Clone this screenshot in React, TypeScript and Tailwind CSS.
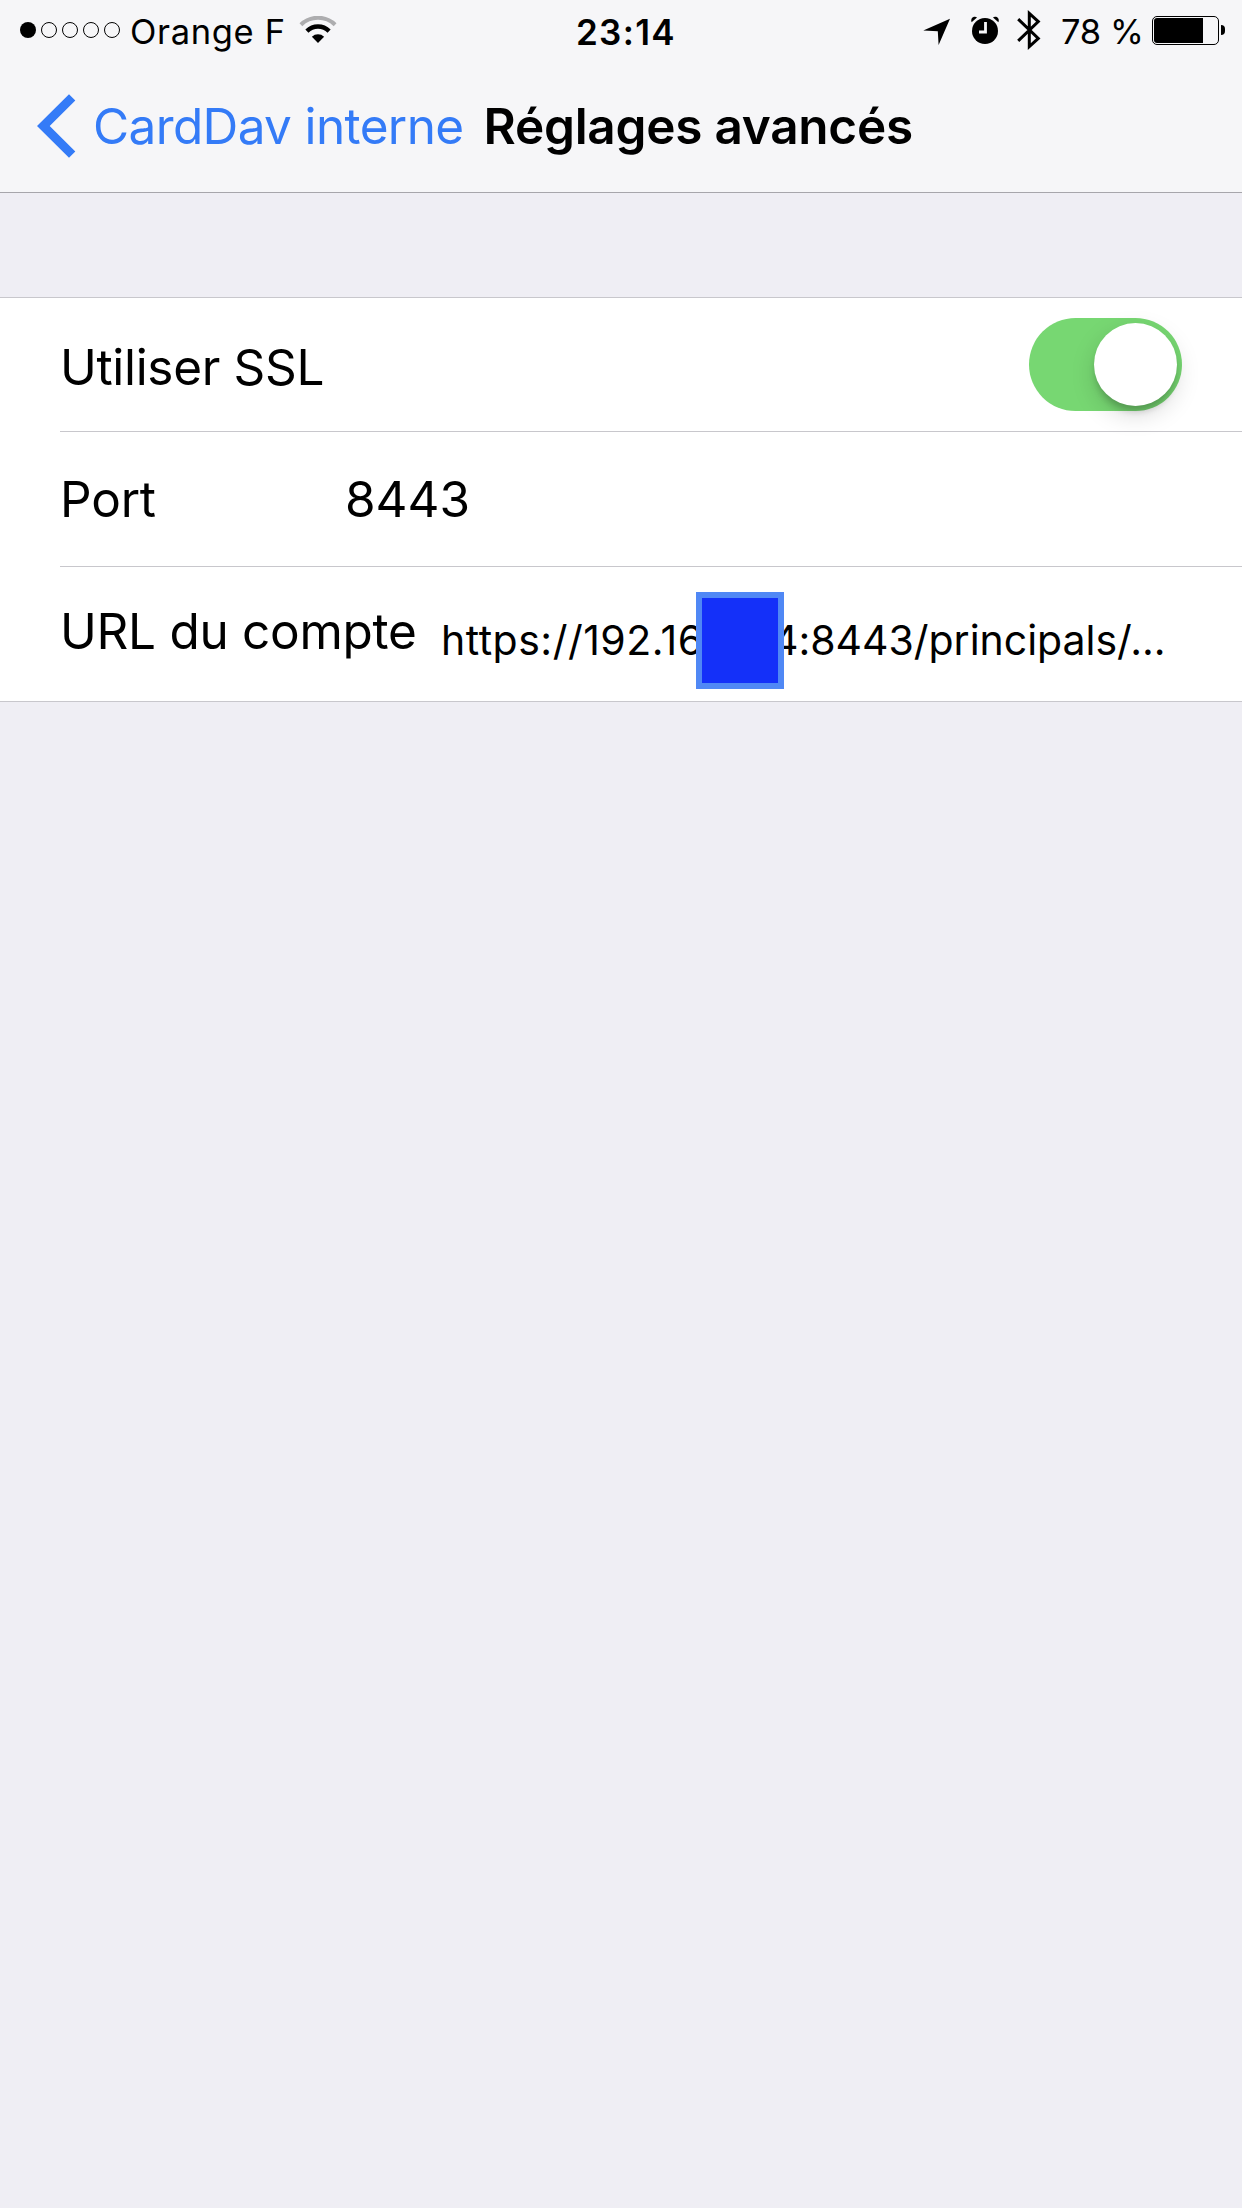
import type { ReactNode } from "react";
import { useState } from "react";

const SIGNAL_STRENGTH = 1;
const BATTERY_LEVEL = 78;

function WifiIcon() {
  return (
    <svg width="38" height="28" viewBox="0 0 38 28" fill="none" aria-hidden="true">
      <path d="M1.9 8.7A24.5 24.5 0 0 1 36.1 8.7" stroke="#adadaf" strokeWidth="4" />
      <path d="M7.9 15.1A15.8 15.8 0 0 1 30.1 15.1" stroke="#000" strokeWidth="4.4" />
      <path d="M19 27 12.9 20.7A8.7 8.7 0 0 1 25.1 20.7Z" fill="#000" />
    </svg>
  );
}

function LocationIcon() {
  return (
    <svg width="28" height="28" viewBox="0 0 28 28" aria-hidden="true">
      <path d="M27 .8 15.6 27 14.8 13.2 .3 12.4Z" fill="#000" />
    </svg>
  );
}

function AlarmIcon() {
  return (
    <svg width="30" height="28" viewBox="0 0 30 28" aria-hidden="true">
      <circle cx="15" cy="15" r="13" fill="#000" />
      <path d="M1.6 6.2C.6 4 1.6 1.4 4 .8 5.2.5 6.3.8 7 1.4Z" fill="#000" />
      <path d="M28.4 6.2C29.4 4 28.4 1.4 26 .8 24.8.5 23.7.8 23 1.4Z" fill="#000" />
      <path d="M15.5 6V16H9" fill="none" stroke="#f6f6f8" strokeWidth="2.8" />
    </svg>
  );
}

function BluetoothIcon() {
  return (
    <svg width="26" height="42" viewBox="0 0 26 42" fill="none" aria-hidden="true">
      <path
        d="M2.2 10.2 22.3 29.4 13.3 37.7V4.3L22.3 12.6 2.2 31.8"
        stroke="#000"
        strokeWidth="3"
      />
    </svg>
  );
}

function StatusBar() {
  return (
    <div className="flex h-[60px] items-center text-[34.5px] leading-[60px] whitespace-nowrap">
      <div className="flex w-[576px] items-center pl-5">
        <div className="flex gap-[5px]">
          {[1, 2, 3, 4, 5].map((dot) => (
            <span
              key={dot}
              className={
                dot <= SIGNAL_STRENGTH
                  ? "size-4 rounded-full bg-black"
                  : "size-4 rounded-full border border-black"
              }
            />
          ))}
        </div>
        <span className="ml-[10px] pt-[3px] tracking-[0.65px]">Orange F</span>
        <span className="ml-[13px]">
          <WifiIcon />
        </span>
      </div>
      <span className="w-[347px] pt-[3px] text-[35px] font-semibold tracking-[1.3px]">23:14</span>
      <div className="flex items-center">
        <span className="pt-[3px]">
          <LocationIcon />
        </span>
        <span className="ml-[19px]">
          <AlarmIcon />
        </span>
        <span className="ml-[16px]">
          <BluetoothIcon />
        </span>
        <span className="ml-[19px] w-[91px] pt-[3px] tracking-[-0.36px]">78 %</span>
        <div className="flex h-[29px] w-[67px] rounded-[5px] border border-black p-px">
          <div className="h-full rounded-l-[3px] bg-black" style={{ width: `${BATTERY_LEVEL}%` }} />
        </div>
        <span className="ml-[2px] h-[10px] w-1 rounded-r-full bg-black" />
      </div>
    </div>
  );
}

function NavBar({ back, title }: { back: string; title: string }) {
  return (
    <div className="flex h-[132px] items-center pl-[37px] whitespace-nowrap">
      <button type="button" className="flex items-center text-[#347bf7]">
        <svg width="39" height="64" viewBox="0 0 39 64" aria-hidden="true">
          <path d="M0 32 32 .3 38.3 6.6 12.7 32 38.3 57.4 32 63.7Z" fill="currentColor" />
        </svg>
        <span className="ml-[17px] tracking-[-0.63px]">{back}</span>
      </button>
      <h1 className="ml-[20px] font-semibold tracking-[-0.25px]">{title}</h1>
    </div>
  );
}

function Switch({ checked, onChange }: { checked: boolean; onChange: (value: boolean) => void }) {
  return (
    <button
      type="button"
      role="switch"
      aria-checked={checked}
      onClick={() => onChange(!checked)}
      className={
        checked
          ? "flex h-[93px] w-[153px] items-center justify-end rounded-full bg-[#77d772] px-[5px]"
          : "flex h-[93px] w-[153px] items-center justify-start rounded-full bg-[#e5e5ea] px-[5px]"
      }
    >
      <span className="size-[83px] rounded-full bg-white shadow-[0_9px_24px_rgba(0,0,0,0.15),0_7px_7px_-2px_rgba(0,0,0,0.2)]" />
    </button>
  );
}

function Row({ children, last = false }: { children: ReactNode; last?: boolean }) {
  return (
    <div
      className={
        last
          ? "flex h-[134px] items-center whitespace-nowrap"
          : "flex h-[135px] items-center border-b border-[#c8c7cc] whitespace-nowrap first:h-[134px]"
      }
    >
      {children}
    </div>
  );
}

export default function App() {
  const [ssl, setSsl] = useState(true);

  return (
    <div className="min-h-screen w-full bg-[#efeef4] font-['Inter','Liberation_Sans',sans-serif] text-[49.5px] leading-[60px] text-black">
      <header className="border-b border-[#a7a6ab] bg-[#f6f6f8]">
        <StatusBar />
        <NavBar back="CardDav interne" title="Réglages avancés" />
      </header>

      <main className="mt-[104px] border-y border-[#c8c7cc] bg-white pl-[60px]">
        <Row>
          <span className="flex-1 pt-[5px] tracking-[-0.33px]">Utiliser SSL</span>
          <span className="mr-[60px]">
            <Switch checked={ssl} onChange={setSsl} />
          </span>
        </Row>
        <Row>
          <span className="w-[285px] tracking-[-0.2px]">Port</span>
          <span>8443</span>
        </Row>
        <Row last>
          <span className="w-[381px] pb-[7px] tracking-[-0.29px]">URL du compte</span>
          <div className="flex items-center pt-[13px] text-[41px]">
            <span className="w-[255px] pb-[2px] tracking-[0.5px]">https://192.16</span>
            {/* hides the middle of the address */}
            <span className="relative z-10 h-[97px] w-[88px] border-[6px] border-[#5088f5] bg-[#1430f9]" />
            <span className="-ml-[12px] pb-[2px] tracking-[-0.03px]">4:8443/principals/...</span>
          </div>
        </Row>
      </main>
    </div>
  );
}
